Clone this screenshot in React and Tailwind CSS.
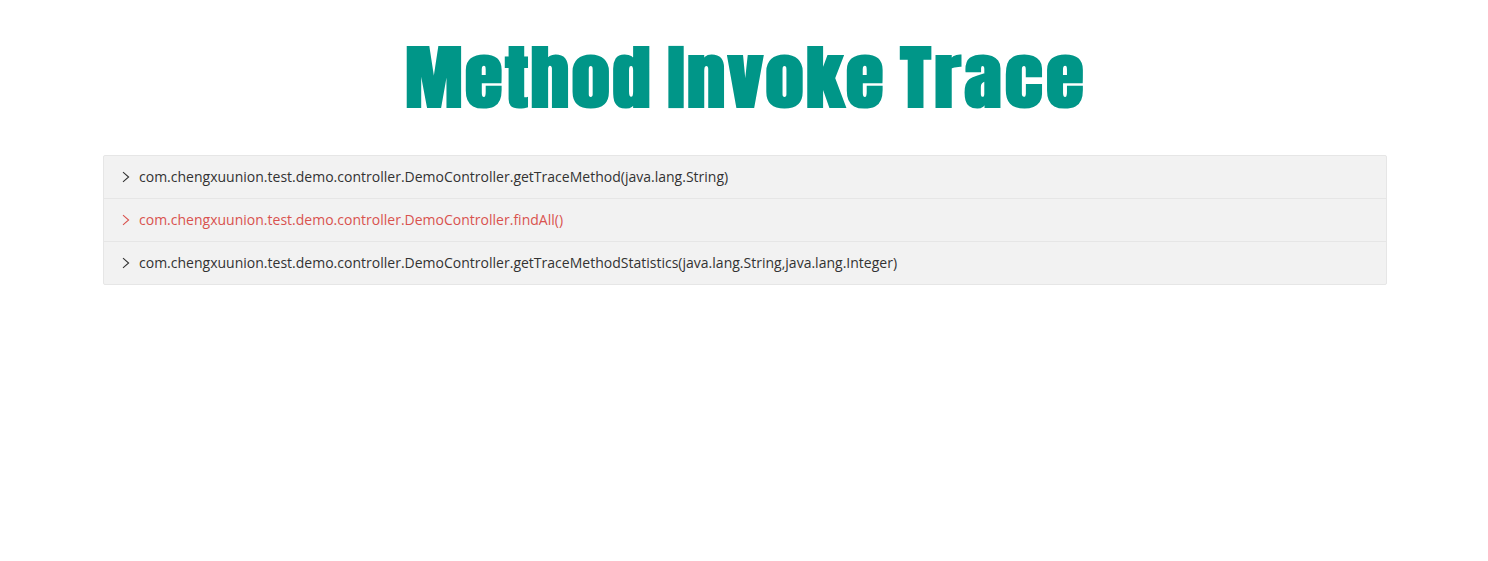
const methods = [
  { name: 'com.chengxuunion.test.demo.controller.DemoController.getTraceMethod(java.lang.String)', color: 'text-[#333]' },
  { name: 'com.chengxuunion.test.demo.controller.DemoController.findAll()', color: 'text-[#d9534f]' },
  { name: 'com.chengxuunion.test.demo.controller.DemoController.getTraceMethodStatistics(java.lang.String,java.lang.Integer)', color: 'text-[#333]' },
];

function Chevron() {
  return (
    <svg className="mr-[9px] h-[12px] w-[8px] shrink-0" viewBox="0 0 8 12" fill="none" stroke="currentColor" strokeWidth="1.1">
      <path d="M1 1.2 6.6 6 1 10.8" />
    </svg>
  );
}

export default function App() {
  return (
    <div className="h-[561px] bg-white font-['Open_Sans',sans-serif]">
      <h1 className="flex h-[155px] items-center justify-center pl-[4px] font-[Impact,Anton,sans-serif] text-[70.5px] leading-[153px] font-bold tracking-[1.8px] whitespace-pre text-[#009688] [word-spacing:-5px]">
        <span className="inline-block scale-x-[1.1]">Method Invoke <span className="tracking-[2.9px]">Trace</span></span>
      </h1>
      <div className="mx-auto w-[1284px] translate-x-px rounded-[2px] border border-[#e6e6e6] bg-[#f2f2f2]">
        {methods.map((m) => (
          <div key={m.name} className={`flex h-[43px] items-center border-b border-[#e6e6e6] pl-[18px] text-[14px] leading-[42px] tracking-[0.008px] last:h-[42px] last:border-b-0 ${m.color}`}>
            <Chevron />
            <span>{m.name}</span>
          </div>
        ))}
      </div>
    </div>
  );
}
